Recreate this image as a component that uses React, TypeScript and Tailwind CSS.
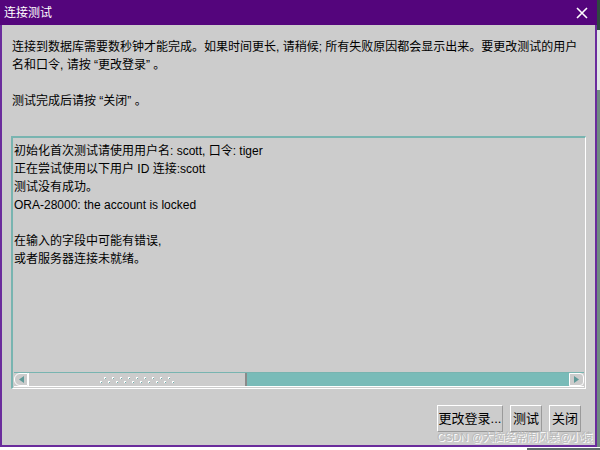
import React from "react";

const font = { fontFamily: '"Liberation Sans", "Noto Sans CJK SC", sans-serif' };

function Btn({ label, w }: { label: string; w: string }) {
  return (
    <div
      className={`${w} h-[27px] flex items-center justify-center text-[13px] text-black border border-t-white border-l-white border-r-[#9a9a9a] border-b-[#9a9a9a] bg-[#cccccc]`}
    >
      {label}
    </div>
  );
}

export default function App() {
  return (
    <div className="w-[600px] h-[450px] bg-white relative overflow-hidden" style={font}>
      <div className="flex">
        <div className="w-[597px] h-[447px] flex flex-col border-l-2 border-r-2 border-b-2 border-[#6a2c9c] bg-[#cccccc]">
          {/* title bar */}
          <div className="h-[25px] bg-[#54057c] flex items-center justify-between pl-[4px] pr-[9px] -mx-[2px]">
            <span className="text-white text-[12px] leading-none">连接测试</span>
            <svg width="12" height="12" viewBox="0 0 12 12">
              <path d="M1 1 L11 11 M11 1 L1 11" stroke="white" strokeWidth="1.6" />
            </svg>
          </div>
          {/* body */}
          <div className="flex-1 flex flex-col pl-[10px] pr-[9px] pt-[13px] text-[12px] leading-[18px] text-black">
            <p className="whitespace-nowrap">连接到数据库需要数秒钟才能完成。如果时间更长, 请稍候; 所有失败原因都会显示出来。要更改测试的用户</p>
            <p>名和口令, 请按 “更改登录” 。</p>
            <p className="mt-[18px]">测试完成后请按 “关闭” 。</p>
            {/* text area */}
            <div className="mt-[26px] -ml-[1px] h-[253px] flex flex-col border-t-2 border-l-2 border-t-[#78b4b0] border-l-[#78b4b0] border-r border-b border-r-white border-b-white">
              <div className="flex-1 pl-[1px] pt-[4px] text-[12px] leading-[18px]">
                <p>初始化首次测试请使用用户名: scott, 口令: tiger</p>
                <p>正在尝试使用以下用户 ID 连接:scott</p>
                <p>测试没有成功。</p>
                <p>ORA-28000: the account is locked</p>
                <p>&nbsp;</p>
                <p>在输入的字段中可能有错误,</p>
                <p>或者服务器连接未就绪。</p>
              </div>
              {/* scrollbar */}
              <div className="h-[15px] mb-[1px] ml-[1px] mr-[1px] flex border-t border-[#78b4b0] border-b border-b-white">
                <div className="w-[14px] flex items-center justify-center border border-white rounded-l-[6px] bg-[#cccccc]">
                  <svg width="5" height="7" viewBox="0 0 5 7">
                    <path d="M5 0 L0 3.5 L5 7 Z" fill="#5f9a98" />
                  </svg>
                </div>
                <div className="w-[219px] flex items-center justify-center border-l border-white border-r-2 border-r-[#8a8a8a] bg-[#cccccc]">
                  <svg width="76" height="8" viewBox="0 0 76 8">
                    {Array.from({ length: 9 }).map((_, i) => (
                      <rect key={"a" + i} x={5 + i * 8} y={1} width={2} height={2} fill="#ffffff" />
                    ))}
                    {Array.from({ length: 10 }).map((_, i) => (
                      <rect key={"b" + i} x={1 + i * 8} y={5} width={2} height={2} fill="#ffffff" />
                    ))}
                    {Array.from({ length: 9 }).map((_, i) => (
                      <rect key={"c" + i} x={6 + i * 8} y={2} width={1} height={1} fill="#6fb0ae" />
                    ))}
                    {Array.from({ length: 10 }).map((_, i) => (
                      <rect key={"d" + i} x={2 + i * 8} y={6} width={1} height={1} fill="#6fb0ae" />
                    ))}
                  </svg>
                </div>
                <div className="flex-1 bg-[#79bbb8]" />
                <div className="w-[15px] flex items-center justify-center border border-white rounded-r-[4px] bg-[#cccccc]">
                  <svg width="5" height="7" viewBox="0 0 5 7">
                    <path d="M0 0 L5 3.5 L0 7 Z" fill="#5f9a98" />
                  </svg>
                </div>
              </div>
            </div>
            {/* buttons */}
            <div className="mt-[16px] flex justify-end gap-[7px] pr-[5px]">
              <Btn label="更改登录..." w="w-[66px]" />
              <Btn label="测试" w="w-[32px]" />
              <Btn label="关闭" w="w-[32px]" />
            </div>
          </div>
        </div>
        <div className="w-[3px] h-[447px] bg-[#3c5a50] flex flex-col">
          <div className="h-[30px] bg-[#2e4a40]" />
          <div className="h-[60px] bg-[#dfe6e4]" />
          <div className="flex-1 bg-[#6e8a80]" />
        </div>
      </div>
      <div className="absolute left-[527px] top-[448px] w-[73px] h-[2px] bg-[#5f6b6b]" />
      <div
        className="absolute left-[437px] top-[430px] text-[11px] leading-[14px] whitespace-nowrap text-[#b9b9b9]"
        style={{ textShadow: "1px 1px 0 #ffffff" }}
      >
        CSDN @大脑经常闹风暴@小猿
      </div>
    </div>
  );
}
